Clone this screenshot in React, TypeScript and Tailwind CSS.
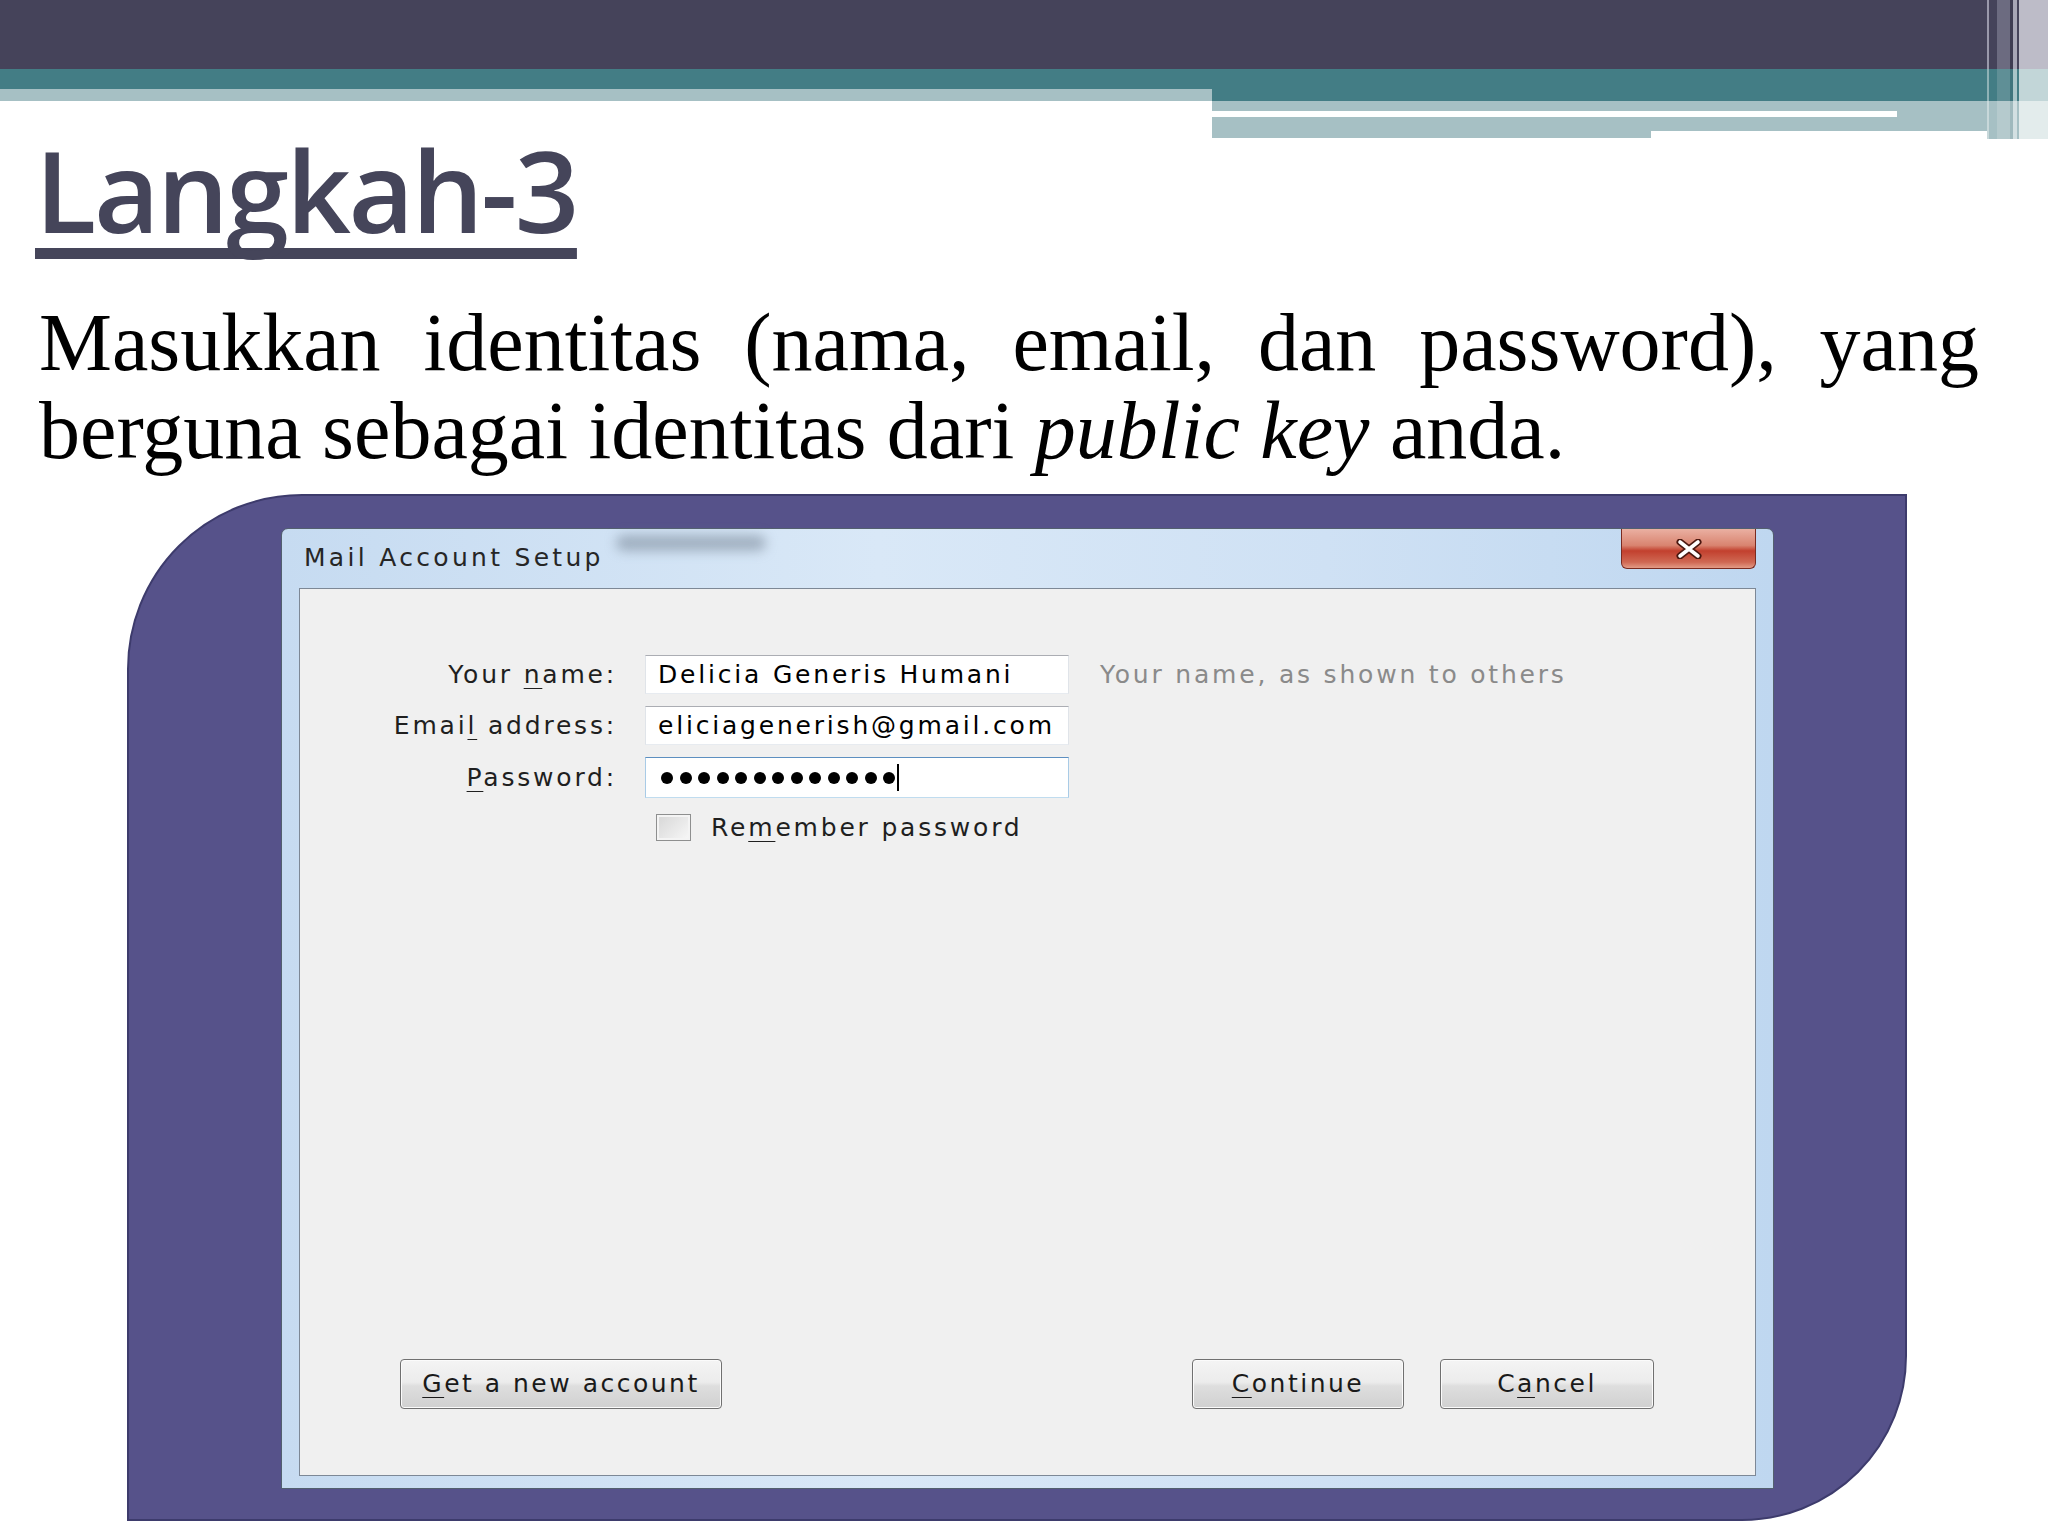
import React from "react";

const stripes = [
  { w: "w-[2px]", a: "bg-[#9a99ab]", b: "bg-[#8fb2b6]", c: "bg-[#c8d8da]" },
  { w: "w-[8px]", a: "bg-[#45435a]", b: "bg-[#437d85]", c: "bg-[#a6c0c4]" },
  { w: "w-[13px]", a: "bg-[#6c6b80]", b: "bg-[#5f8f96]", c: "bg-[#b5cacd]" },
  { w: "w-[3px]", a: "bg-[#3e3c52]", b: "bg-[#3f757d]", c: "bg-[#9fb9bd]" },
  { w: "w-[4px]", a: "bg-[#a7a6b6]", b: "bg-[#a9c6c9]", c: "bg-[#d3e0e2]" },
  { w: "w-[2px]", a: "bg-[#45435a]", b: "bg-[#437d85]", c: "bg-[#a6c0c4]" },
  { w: "w-[29px]", a: "bg-[#bdbcc8]", b: "bg-[#c2d6d8]", c: "bg-[#e3ecec]" },
];

function Header() {
  return (
    <div className="flex h-[139px]">
      <div className="flex w-[1212px] flex-col">
        <div className="h-[69px] bg-[#45435a]" />
        <div className="h-[20px] bg-[#437d85]" />
        <div className="h-[12px] bg-[#a6c0c4]" />
      </div>
      <div className="flex w-[775px] flex-col">
        <div className="h-[69px] bg-[#45435a]" />
        <div className="h-[32px] bg-[#437d85]" />
        <div className="h-[10px] bg-[#a6c0c4]" />
        <div className="flex h-[6px]">
          <div className="w-[685px] bg-white" />
          <div className="flex-1 bg-[#a6c0c4]" />
        </div>
        <div className="h-[14px] bg-[#a6c0c4]" />
        <div className="flex h-[7px]">
          <div className="w-[439px] bg-[#a6c0c4]" />
          <div className="flex-1 bg-white" />
        </div>
      </div>
      <div className="flex flex-1">
        {stripes.map((s, i) => (
          <div key={i} className={`flex flex-col ${s.w}`}>
            <div className={`h-[69px] ${s.a}`} />
            <div className={`h-[32px] ${s.b}`} />
            <div className={`h-[38px] ${s.c}`} />
          </div>
        ))}
      </div>
    </div>
  );
}

// underlined access key letter
function K({ children }: { children: React.ReactNode }) {
  return <u className="underline decoration-1 underline-offset-[5px]">{children}</u>;
}

function Field({ children, focused }: { children: React.ReactNode; focused?: boolean }) {
  return (
    <div
      className={
        focused
          ? "flex h-[41px] w-[424px] items-center border border-t-[#5d8fc0] border-x-[#a9cbe6] border-b-[#c0dcef] bg-white pl-[15px]"
          : "flex h-[39px] w-[424px] items-center border border-t-[#abadb3] border-x-[#e0e4e9] border-b-[#e7ebf0] bg-white pl-[12px] leading-[37px] text-black"
      }
    >
      {children}
    </div>
  );
}

function Label({ children, tall }: { children: React.ReactNode; tall?: boolean }) {
  return (
    <div className={`w-[317px] text-right text-[#1f1f1f] ${tall ? "leading-[41px]" : "leading-[39px]"}`}>
      {children}
    </div>
  );
}

function WinButton({ children, width }: { children: React.ReactNode; width: string }) {
  return (
    <div
      className={`flex h-[50px] ${width} items-center justify-center rounded-[4px] border border-[#707070] bg-[linear-gradient(180deg,#f4f4f4_0%,#ececec_46%,#dedede_54%,#d0d0d0_100%)] text-[25px] tracking-[2.5px] text-[#1a1a1a] shadow-[inset_0_0_0_1px_#fbfbfb]`}
    >
      {children}
    </div>
  );
}

function Dialog() {
  return (
    <div className="relative flex h-[961px] w-[1493px] flex-col rounded-t-[7px] border border-[#53606f] bg-[linear-gradient(90deg,#c6dbf1_0%,#d9e8f7_40%,#cfe1f4_70%,#bfd7f0_100%)] px-[17px] pb-[12px] font-['DejaVu_Sans',sans-serif] text-[25px] tracking-[2.8px]">
      <div className="pointer-events-none absolute left-[334px] top-[6px] h-[16px] w-[150px] rounded-full bg-[#6d7c8c]/50 blur-[6px]" />
      <div className="flex h-[59px] items-start justify-between">
        <div className="pl-[5px] pt-[15px] leading-[28px] tracking-[3.3px] text-[#262626]">Mail Account Setup</div>
        <div className="flex h-[40px] w-[135px] items-center justify-center rounded-b-[6px] border border-t-0 border-[#7a2b20] bg-[linear-gradient(180deg,#eab0a2_0%,#d98470_42%,#c2402e_56%,#cf6853_85%,#e39b86_100%)]">
          <svg width="28" height="20" viewBox="0 0 28 20">
            <path d="M5 3 L23 17 M23 3 L5 17" stroke="#4b1810" strokeWidth="7" strokeLinecap="round" fill="none" />
            <path d="M5 3 L23 17 M23 3 L5 17" stroke="#ffffff" strokeWidth="3.6" strokeLinecap="round" fill="none" />
          </svg>
        </div>
      </div>
      <div className="flex flex-1 flex-col border border-[#7d8896] bg-[#f0f0f0]">
        <div className="mt-[66px] flex flex-col gap-[12px]">
          <div className="flex items-center gap-[28px]">
            <Label>
              Your <K>n</K>ame:
            </Label>
            <Field>Delicia Generis Humani</Field>
            <div className="pl-[3px] text-[#8a8a8a]">Your name, as shown to others</div>
          </div>
          <div className="flex items-center gap-[28px]">
            <Label>
              Emai<K>l</K> address:
            </Label>
            <Field>eliciagenerish@gmail.com</Field>
          </div>
          <div className="flex items-center gap-[28px]">
            <Label tall>
              <K>P</K>assword:
            </Label>
            <Field focused>
              <div className="flex items-center gap-[6.5px]">
                {Array.from({ length: 13 }).map((_, i) => (
                  <div key={i} className="h-[12px] w-[12px] rounded-full bg-black" />
                ))}
              </div>
              <div className="ml-[2px] h-[27px] w-[2px] bg-black" />
            </Field>
          </div>
        </div>
        <div className="mt-[16px] flex items-center gap-[20px] pl-[356px]">
          <div className="h-[27px] w-[35px] border border-[#8e8f8f] bg-[linear-gradient(135deg,#d6d6d6,#f8f8f8)] shadow-[inset_0_0_0_2px_#f4f4f4]" />
          <div className="leading-[27px] text-[#1f1f1f]">
            Re<K>m</K>ember password
          </div>
        </div>
        <div className="flex-1" />
        <div className="flex items-center pb-[66px] pl-[100px] pr-[101px]">
          <WinButton width="w-[322px]">
            <span>
              <K>G</K>et a new account
            </span>
          </WinButton>
          <div className="flex-1" />
          <WinButton width="w-[212px]">
            <span>
              <K>C</K>ontinue
            </span>
          </WinButton>
          <div className="w-[36px]" />
          <WinButton width="w-[214px]">
            <span>
              C<K>a</K>ncel
            </span>
          </WinButton>
        </div>
      </div>
    </div>
  );
}

export default function App() {
  return (
    <div className="min-h-[1536px] w-[2048px] overflow-hidden bg-white">
      <Header />
      <div className="h-[100px] pl-[35px] font-['Open_Sans',sans-serif] text-[113px] font-semibold leading-[100px] tracking-[-2.5px] text-[#45455a]">
        <span className="underline decoration-[#45455a] decoration-[11px] underline-offset-[15px] [text-decoration-skip-ink:none]">
          Langkah-3
        </span>
      </div>
      <div className="mt-[60px] pl-[39px] pr-[69px] font-['Liberation_Serif',serif] text-[82px] leading-[88px] text-black">
        <p className="text-justify [text-align-last:justify]">Masukkan identitas (nama, email, dan password), yang</p>
        <p>
          berguna sebagai identitas dari <i>public key</i> anda.
        </p>
      </div>
      <div className="ml-[127px] mt-[19px] h-[1027px] w-[1780px] rounded-br-[165px] rounded-tl-[175px] border-2 border-[#3d3b6c] bg-[#56528a] pl-[152px] pt-[32px]">
        <Dialog />
      </div>
    </div>
  );
}
